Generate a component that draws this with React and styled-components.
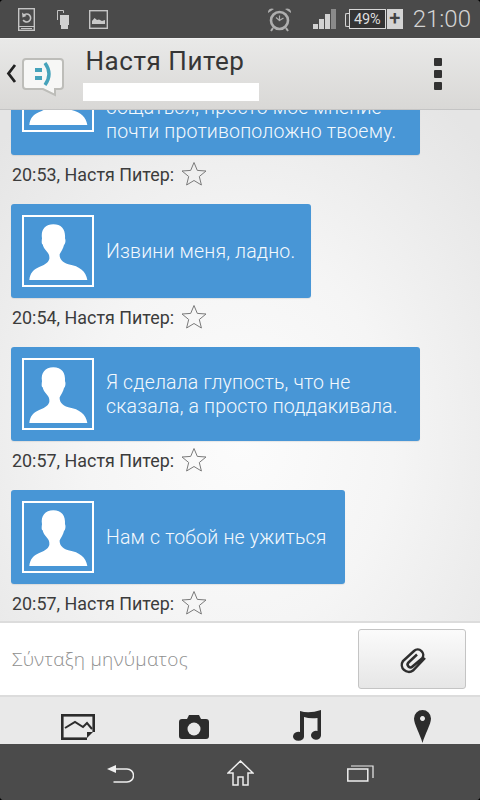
import React from "react";
import styled, { createGlobalStyle } from "styled-components";

const Global = createGlobalStyle`
  html, body { margin: 0; padding: 0; background: #000; }
  #root { width: 480px; height: 800px; }
  * { box-sizing: border-box; }
`;

const Screen = styled.div`
  width: 480px; height: 800px; display: flex; flex-direction: column; overflow: hidden; border-radius: 4px;
  font-family: Roboto, "Noto Sans", sans-serif; background: #4b4b4b; position: relative;
`;
const StatusBar = styled.div`
  height: 38px; flex: none; background: #4a4a4a; display: flex; align-items: center; padding: 0 9px 0 18px; color: #d0d0d0;
`;
const StatusIcon = styled.svg`
  display: block; flex: none; margin-right: ${p => p.$gap || 0}px;
`;
const Spacer = styled.div`flex: 1;`;
const Battery = styled.div`
  width: 37px; height: 20px; border: 1px solid #d8d8d8; background: #333; color: #ddd; font-size: 14.5px; display: flex; align-items: center; justify-content: center; margin: 0 1px 0 4px; letter-spacing: -0.2px; position: relative;
  &::before { content: ""; position: absolute; left: -5px; top: 3px; width: 4px; height: 12px; border: 1px solid #d8d8d8; border-right: none; border-radius: 2px 0 0 2px; }
`;
const Plug = styled.div`
  width: 16px; height: 20px; background: #d4d4d4; color: #444; font-size: 20px; font-weight: 500; line-height: 19px; text-align: center; margin-right: 10px;
`;
const Clock = styled.div`
  font-size: 24px; font-weight: 300; color: #d4d4d4; letter-spacing: 0;
`;
const Header = styled.div`
  height: 72px; flex: none; display: flex; align-items: stretch; background: linear-gradient(#e9e9e8, #d9d8d6); border-top: 1px solid #f2f2f2; border-bottom: 1px solid #c4c4c4; position: relative; z-index: 1;
`;
const Logo = styled.div`
  width: 83px; flex: none; display: flex; align-items: flex-start; padding: 18px 0 0 5px;
`;
const HeaderText = styled.div`
  flex: 1; display: flex; flex-direction: column;
`;
const Title = styled.div`
  font-size: 26px; color: #363636; line-height: 30px; margin: 7px 0 0 2.500px; letter-spacing: 0.55px; font-weight: 400;
`;
const Redaction = styled.div`
  width: 176px; height: 18px; background: #fff; margin-top: 7px;
`;
const Menu = styled.div`
  width: 46px; flex: none; display: flex; flex-direction: column; gap: 4px; padding-top: 19px;
`;
const MenuDot = styled.div`
  width: 8px; height: 8px; background: #323232; border-radius: 1px;
`;
const List = styled.div`
  flex: 1; min-height: 0; overflow: hidden; display: flex; flex-direction: column; justify-content: flex-end; padding: 0 0 2px 11px;
  background: radial-gradient(ellipse 340px 420px at 240px 330px, #fcfcfc 0%, #f5f5f5 45%, #e5e5e5 100%);
  border-bottom: 2px solid #dcdcdc;
`;
const Message = styled.div`
  flex: none; margin-bottom: ${p => p.$last ? 0 : 14}px;
`;
const Bubble = styled.div`
  width: ${p => p.$w}px; height: ${p => p.$h}px; background: #4896d6; border-radius: 3px; padding: 11px; display: flex; align-items: center; gap: 12px; box-shadow: 0 1px 1px rgba(0,0,0,.08);
`;
const Avatar = styled.div`
  width: 72px; height: 72px; flex: none; border: 2px solid #fff;
`;
const BubbleText = styled.div`
  color: #f4f9fd; font-weight: 300; font-size: 19.500px; line-height: 24px; letter-spacing: 0.18px; white-space: pre-line; padding-top: 1px;
  align-self: ${p => p.$bottom ? "flex-end" : "center"};
`;
const Meta = styled.div`
  display: flex; align-items: center; height: 32px; padding-left: 1px; margin-top: 3px; font-size: 17.900px; color: #3c3c3c; gap: 7px; font-weight: 400;
`;
const Composer = styled.div`
  height: 74px; flex: none; background: #fff; display: flex; align-items: center; padding: 0 14px 0 12px; justify-content: space-between; border-bottom: 2px solid #dcdcdc;
`;
const Placeholder = styled.div`
  font-size: 19px; color: #8f8f8f; font-weight: 300; font-family: "Open Sans", Roboto, sans-serif; letter-spacing: 0.3px;
`;
const AttachButton = styled.div`
  width: 108px; height: 60px; border: 1px solid #c4c4c4; border-radius: 3px; background: linear-gradient(#fbfbfb, #e6e6e6); display: flex; align-items: center; justify-content: center;
`;
const Tools = styled.div`
  height: 47px; flex: none; background: #e9e9e9; display: flex; align-items: flex-start; padding-left: 61px;
`;
const ToolIcon = styled.svg`
  display: block; flex: none; margin-left: ${p => p.$left || 0}px; margin-top: ${p => p.$top}px;
`;
const Nav = styled.div`
  height: 56px; flex: none; background: #4b4b4b; display: flex; align-items: center; padding: 2px 0 0;
`;
const NavSlot = styled.div`
  flex: none; display: flex; justify-content: center; width: ${p => p.$w}px;
`;

const Person = () => (
  <svg width="68" height="68" viewBox="72 66 204 204" style={{ display: "block" }}>
    <path fill="#fff" d="M88 255C90 235 100 224 116 217C130 210 144 206 148 192C149 182 146 175 141 170C134 163 129 155 128 148C124 148 125 136 126 130C122 105 135 88 160 88C185 88 197 104 195 130C198 136 196 148 192 150C190 160 183 170 179 178C178 190 185 202 205 208C240 214 258 230 262 255Z"/>
  </svg>
);

const Star = () => (
  <svg width="26" height="26" viewBox="0 0 26 26">
    <path fill="none" stroke="#7a7a7a" strokeWidth="1" d="M13 1.500 L16.300 9.400 L25 10 L18.300 15.500 L20.400 24 L13 19.500 L5.600 24 L7.700 15.500 L1 10 L9.700 9.400 Z"/>
  </svg>
);

const messages = [
  { w: 409, h: 118, bottom: true, text: "общаться, просто мое мнение\nпочти противоположно твоему.", time: "20:53" },
  { w: 300, h: 94, text: "Извини меня, ладно.", time: "20:54" },
  { w: 409, h: 94, text: "Я сделала глупость, что не\nсказала, а просто поддакивала.", time: "20:57" },
  { w: 334, h: 94, text: "Нам с тобой не ужиться", time: "20:57", last: true },
];

export default function App() {
  return (
    <Screen>
      <Global />
      <StatusBar>
        <StatusIcon $gap={22} width="17" height="23" viewBox="0 0 17 23">
          <rect x=".7" y=".7" width="15.600" height="21.600" fill="none" stroke="#c4c4c4" strokeWidth="1.400"/>
          <path d="M1 18.500H16M3 20.500H14" stroke="#c4c4c4" strokeWidth="1"/>
          <path d="M5.500 7.500a4 4 0 1 1 -.3 4.500" fill="none" stroke="#c4c4c4" strokeWidth="1.600"/>
          <path d="M4 4.500l.5 5 4-1.500z" fill="#c4c4c4"/>
        </StatusIcon>
        <StatusIcon $gap={20} width="12" height="19" viewBox="0 0 12 19">
          <path d="M.5 10V.5H6.500V3" fill="none" stroke="#c4c4c4" strokeWidth="1"/>
          <path d="M3 5H12V15H11V19H4V15H3Z" fill="#d0d0d0"/>
        </StatusIcon>
        <StatusIcon width="19" height="19" viewBox="0 0 19 19">
          <rect x=".7" y=".7" width="17.600" height="17.600" fill="none" stroke="#c4c4c4" strokeWidth="1.400"/>
          <path d="M3 14V11L5.500 8L8 10L10 9.500L13 11L16 10V14Z" fill="#c8c8c8"/>
        </StatusIcon>
        <Spacer />
        <StatusIcon $gap={22} width="23" height="25" viewBox="0 0 23 25">
          <circle cx="11.500" cy="13.500" r="8.500" fill="none" stroke="#aeaeae" strokeWidth="2.600"/>
          <path d="M11.500 8.500v5l4-2.500M11.500 13.500L8 10.500" fill="none" stroke="#aeaeae" strokeWidth="1.200"/>
          <path d="M0 6a4 4 0 0 1 6-4zM23 6a4 4 0 0 0-6-4z" fill="#aeaeae"/>
          <path d="M5 21l-2 3M18 21l2 3" stroke="#aeaeae" strokeWidth="2"/>
        </StatusIcon>
        <StatusIcon $gap={9} width="23" height="20" viewBox="0 0 23 20">
          <rect x="0" y="15" width="5" height="5" fill="#d2d2d2"/>
          <rect x="6" y="10" width="5" height="10" fill="#d2d2d2"/>
          <rect x="12" y="5" width="5" height="15" fill="#d2d2d2"/>
          <rect x="18" y="0" width="5" height="20" fill="#8a8a8a"/>
        </StatusIcon>
        <Battery>49%</Battery>
        <Plug>+</Plug>
        <Clock>21:00</Clock>
      </StatusBar>
      <Header>
        <Logo>
          <svg width="62" height="42" viewBox="0 0 62 42">
            <path d="M10 8L3.500 16.500L10 25" fill="none" stroke="#222" strokeWidth="2.800"/>
            <path d="M21 2H55Q58 2 58 5V29Q58 32 55 32H50L50 38L38 32H21Q18 32 18 29V5Q18 2 21 2Z" fill="#f7f7f6" stroke="#bdbdb9" strokeWidth="2"/>
            <rect x="30" y="11" width="7" height="4" fill="#46a3bb"/>
            <rect x="30" y="19" width="7" height="4" fill="#46a3bb"/>
            <path d="M40 6Q48 17 40 28" fill="none" stroke="#46a3bb" strokeWidth="3.400"/>
          </svg>
        </Logo>
        <HeaderText>
          <Title>Настя Питер</Title>
          <Redaction />
        </HeaderText>
        <Menu><MenuDot /><MenuDot /><MenuDot /></Menu>
      </Header>
      <List>
        {messages.map((m, i) => (
          <Message key={i} $last={m.last}>
            <Bubble $w={m.w} $h={m.h}>
              <Avatar><Person /></Avatar>
              <BubbleText $bottom={m.bottom}>{m.text}</BubbleText>
            </Bubble>
            <Meta>{m.time}, Настя Питер: <Star /></Meta>
          </Message>
        ))}
      </List>
      <Composer>
        <Placeholder>Σύνταξη μηνύματος</Placeholder>
        <AttachButton>
          <svg width="45" height="45" viewBox="0 0 45 45">
            <path d="M35 21L23 33.500A7 7 0 0 1 13 24L24 14A5.500 5.500 0 0 1 32 21.500L22.500 29.500A2.800 2.800 0 0 1 18.500 25.500L27 17.500" fill="none" stroke="#2e2e2e" strokeWidth="2.500"/>
          </svg>
        </AttachButton>
      </Composer>
      <Tools>
        <ToolIcon $top={17} width="34" height="26" viewBox="0 0 34 26">
          <rect x="1.300" y="1.300" width="31.400" height="23.400" fill="none" stroke="#2c2c2c" strokeWidth="2.600"/>
          <path d="M4 14L14 8L22 13L26 9L31 15" fill="none" stroke="#2c2c2c" strokeWidth="2"/>
          <path d="M26 26V18H34V26Z" fill="#e9e9e9"/>
          <path d="M26 24V18H32Z" fill="#2c2c2c"/>
        </ToolIcon>
        <ToolIcon $left={84} $top={18} width="30" height="24" viewBox="0 0 30 24">
          <path fill="#2c2c2c" d="M3 4H8L10 0H20L22 4H27Q30 4 30 7V21Q30 24 27 24H3Q0 24 0 21V7Q0 4 3 4Z"/>
          <circle cx="15" cy="14" r="6.500" fill="#e9e9e9"/>
        </ToolIcon>
        <ToolIcon $left={84} $top={13} width="29" height="31" viewBox="0 0 29 31">
          <path fill="#2c2c2c" d="M7 1Q16 4 28 0V25A5 4.500 0 1 1 24.500 21V8Q17 9 11 7V26A5.500 4.500 0 1 1 7 22Z"/>
        </ToolIcon>
        <ToolIcon $left={92} $top={13} width="17" height="33" viewBox="0 0 17 33">
          <path fill="#2c2c2c" fillRule="evenodd" d="M8.500 0A8.500 8.500 0 0 1 17 8.500C17 14 11 24 8.500 33C6 24 0 14 0 8.500A8.500 8.500 0 0 1 8.500 0ZM8.500 6A2.500 2.500 0 1 0 8.510 6Z"/>
        </ToolIcon>
      </Tools>
      <Nav>
        <NavSlot $w={240}>
          <svg width="27" height="19" viewBox="0 0 27 19">
            <path d="M7 5H20A6 6 0 0 1 20 18H6.500" fill="none" stroke="#eee" strokeWidth="1.500"/>
            <path d="M0 5L9 1V9Z" fill="#eee"/>
          </svg>
        </NavSlot>
        <NavSlot $w={0}>
          <svg width="27" height="26" viewBox="0 0 27 26" style={{ flex: "none" }}>
            <path d="M1 13L13.500 1L26 13H21V25H16V17H11V25H6V13Z" fill="none" stroke="#eee" strokeWidth="1.500"/>
          </svg>
        </NavSlot>
        <NavSlot $w={240}>
          <svg width="27" height="18" viewBox="0 0 27 18">
            <rect x=".8" y="5" width="20" height="12" fill="none" stroke="#eee" strokeWidth="1.500"/>
            <path d="M4 2H26V14" fill="none" stroke="#eee" strokeWidth="1.200"/>
          </svg>
        </NavSlot>
      </Nav>
    </Screen>
  );
}
